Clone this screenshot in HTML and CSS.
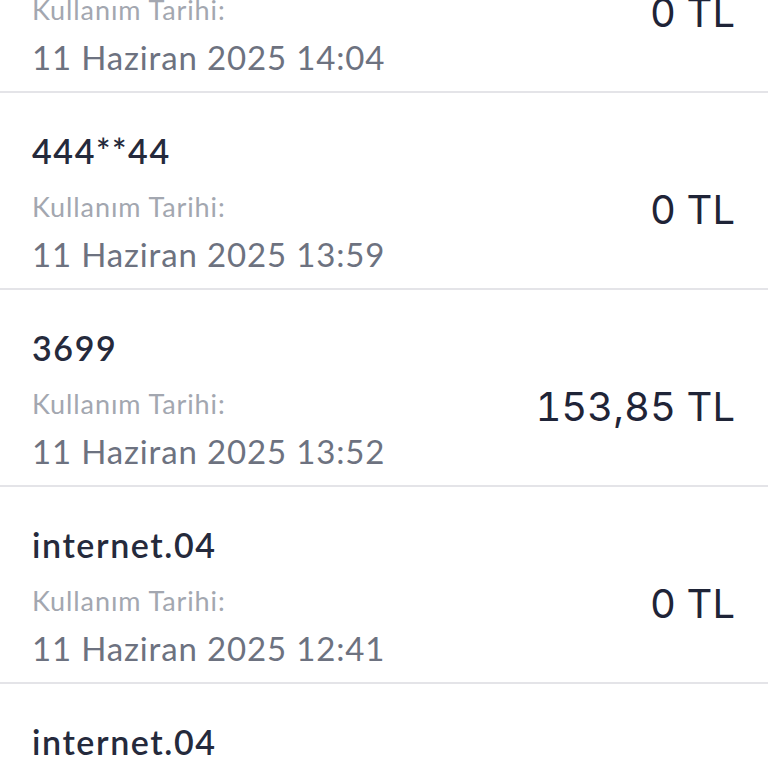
FILE: index.html
```html
<!DOCTYPE html>
<html lang="tr">
<head>
<meta charset="utf-8">
<title>Kullanım Geçmişi</title>
<link rel="stylesheet" href="styles.css">
</head>
<body>
<main class="list">
  <div class="row">
    <div class="info">
      <div class="title">internet.04</div>
      <div class="label">Kullanım Tarihi:</div>
      <div class="date">11 Haziran 2025 14:04</div>
    </div>
    <div class="amount">0 TL</div>
  </div>
  <div class="row">
    <div class="info">
      <div class="title">444**44</div>
      <div class="label">Kullanım Tarihi:</div>
      <div class="date">11 Haziran 2025 13:59</div>
    </div>
    <div class="amount">0 TL</div>
  </div>
  <div class="row">
    <div class="info">
      <div class="title">3699</div>
      <div class="label">Kullanım Tarihi:</div>
      <div class="date">11 Haziran 2025 13:52</div>
    </div>
    <div class="amount">153,85 TL</div>
  </div>
  <div class="row">
    <div class="info">
      <div class="title">internet.04</div>
      <div class="label">Kullanım Tarihi:</div>
      <div class="date">11 Haziran 2025 12:41</div>
    </div>
    <div class="amount">0 TL</div>
  </div>
  <div class="row">
    <div class="info">
      <div class="title">internet.04</div>
      <div class="label">Kullanım Tarihi:</div>
      <div class="date">11 Haziran 2025 12:30</div>
    </div>
    <div class="amount">0 TL</div>
  </div>
</main>
</body>
</html>
```
FILE: styles.css
```css
html, body {
  margin: 0;
  padding: 0;
  background: #ffffff;
}
body {
  height: 768px;
  overflow: hidden;
  font-family: "Lato", "Noto Sans", sans-serif;
}
.list {
  margin-top: -104px;
  display: flex;
  flex-direction: column;
}
.row {
  display: flex;
  justify-content: space-between;
  align-items: center;
  padding: 38px 33px 14px 32px;
  border-bottom: 2px solid #e4e4e8;
}
.info {
  display: flex;
  flex-direction: column;
}
.title {
  font-size: 34px;
  line-height: 40px;
  font-weight: 600;
  letter-spacing: 1.6px;
  color: #252a3c;
  margin-bottom: 20px;
}
.label {
  font-size: 27px;
  line-height: 32px;
  font-weight: 400;
  letter-spacing: 0.9px;
  color: #a3a7b0;
}
.date {
  margin-top: 11px;
  font-size: 33px;
  line-height: 40px;
  letter-spacing: 0.85px;
  color: #6d7280;
}
.amount {
  margin-top: 14px;
  font-family: "Inter", "Noto Sans", sans-serif;
  font-size: 40px;
  line-height: 48px;
  font-variant-numeric: tabular-nums;
  color: #1f2437;
}
```
